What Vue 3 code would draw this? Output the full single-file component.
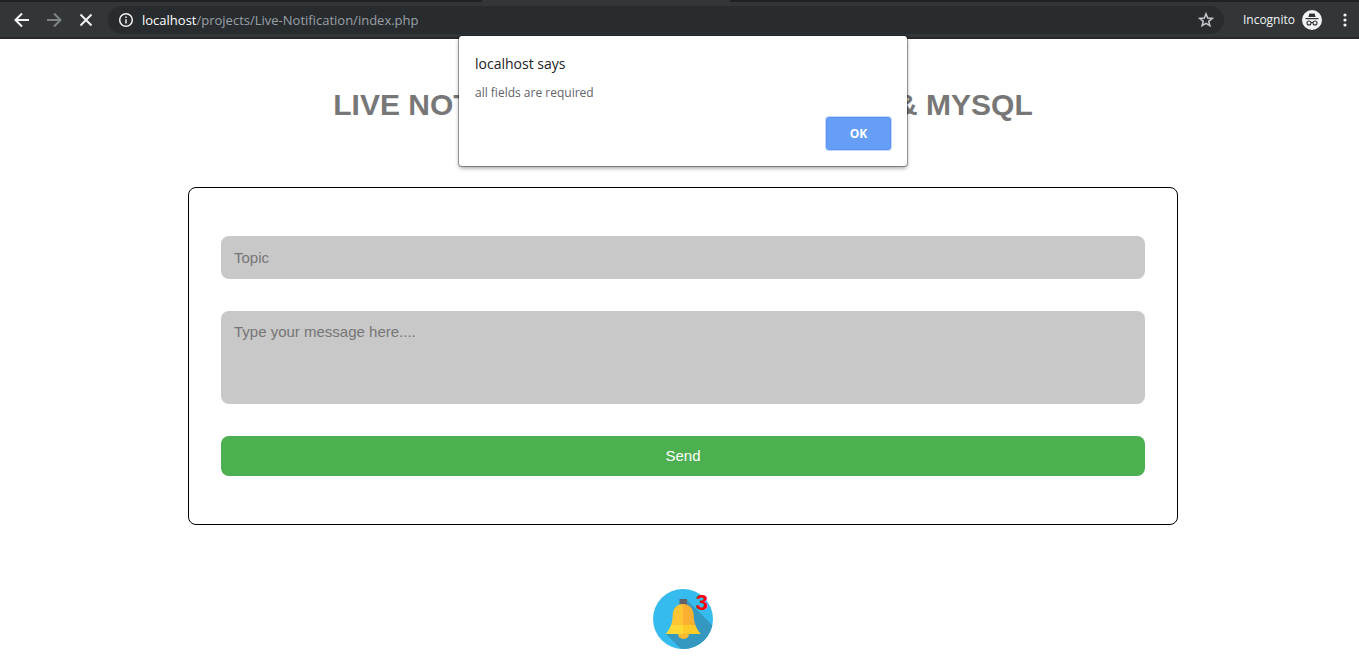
<script setup>
import { ref } from 'vue'

const url = { host: 'localhost', path: '/projects/Live-Notification/index.php' }
const topic = ref('')
const message = ref('')
const count = ref(3)
const alertOpen = ref(true)

function send() {
  if (!topic.value || !message.value) {
    alertOpen.value = true
    return
  }
  count.value += 1
  topic.value = ''
  message.value = ''
}
</script>

<template>
  <div class="browser">
    <header class="chrome">
      <div class="tabs"><span class="tab"></span></div>
      <div class="toolbar">
        <nav class="nav">
          <button type="button" aria-label="Back">
            <svg width="16" height="16" viewBox="0 0 16 16"><path d="M15 8H2M8 1.5 1.5 8 8 14.5" /></svg>
          </button>
          <button type="button" class="dim" aria-label="Forward">
            <svg width="16" height="16" viewBox="0 0 16 16"><path d="M1 8h13M8 1.5 14.5 8 8 14.5" /></svg>
          </button>
          <button type="button" aria-label="Stop loading">
            <svg width="16" height="16" viewBox="0 0 16 16"><path d="m2.500 2.500 11 11m0-11-11 11" /></svg>
          </button>
        </nav>
        <div class="omnibox">
          <svg class="info" width="16" height="16" viewBox="0 0 16 16">
            <circle cx="8" cy="8" r="6.3" />
            <path d="M8 7.2v4.2M8 4.4v1.7" />
          </svg>
          <span class="url"><b>{{ url.host }}</b>{{ url.path }}</span>
          <button type="button" class="star" aria-label="Bookmark this page">
            <svg width="16" height="16" viewBox="0 0 16 16">
              <path d="m8 1.9 1.7 4.2 4.5.3-3.5 2.9 1.2 4.4L8 11.3l-3.9 2.4 1.2-4.4-3.5-2.9 4.5-.3z" />
            </svg>
          </button>
        </div>
        <div class="profile">
          <span>Incognito</span>
          <svg width="20" height="20" viewBox="0 0 20 20">
            <circle cx="10" cy="10" r="10" fill="#f1f3f4" />
            <path d="M6.4 7 7.3 4q.3-.9 1.2-.6L10 3.8l1.5-.4q.9-.3 1.2.6l.9 3z" fill="#303134" />
            <path d="M3.5 8.6h13" stroke="#303134" stroke-width="1.2" />
            <g fill="none" stroke="#303134" stroke-width="1.1">
              <circle cx="7" cy="13" r="2" />
              <circle cx="13" cy="13" r="2" />
              <path d="M9 12.8q1-.7 2 0" />
            </g>
          </svg>
        </div>
        <button type="button" class="menu" aria-label="Menu">
          <svg width="4" height="14" viewBox="0 0 4 14">
            <circle cx="2" cy="2" r="1.6" /><circle cx="2" cy="7" r="1.6" /><circle cx="2" cy="12" r="1.6" />
          </svg>
        </button>
      </div>
    </header>

    <main class="page">
      <h1>LIVE NOTIFICATION USING AJAX, PHP &amp; MYSQL</h1>
      <form class="card" novalidate @submit.prevent="send">
        <input v-model="topic" type="text" placeholder="Topic" aria-label="Topic" />
        <textarea v-model="message" placeholder="Type your message here...." aria-label="Message"></textarea>
        <button type="submit">Send</button>
      </form>
      <div class="bell">
        <svg width="60" height="60" viewBox="0 0 60 60">
          <defs>
            <clipPath id="disc"><circle cx="30" cy="30" r="30" /></clipPath>
            <clipPath id="left"><rect width="30" height="60" /></clipPath>
            <path id="body" d="M30 15C23 15 20 20 19.700 26C19.400 33 18.500 38 12.700 45H47.800C42 38 41 33 40.700 26C40.400 20 37 15 30 15z" />
            <clipPath id="bodyclip"><use href="#body" /></clipPath>
          </defs>
          <circle cx="30" cy="30" r="30" fill="#35bbed" />
          <path clip-path="url(#disc)" d="M34 11 66 43V66H34L13 45 30 30z" fill="#3498c1" />
          <rect x="26.500" y="10" width="7.500" height="6" fill="#5f6266" />
          <path d="M25 45a5.500 5 0 0 0 11 0z" fill="#fdb932" />
          <g clip-path="url(#bodyclip)">
            <rect x="10" y="14" width="20" height="22" fill="#ffc533" />
            <rect x="30" y="14" width="20" height="22" fill="#fdaf31" />
            <rect x="10" y="36" width="20" height="10" fill="#ffd936" />
            <rect x="30" y="36" width="20" height="10" fill="#ffcb28" />
          </g>
        </svg>
        <span class="count">{{ count }}</span>
      </div>
    </main>

    <div v-if="alertOpen" class="overlay">
      <section class="dialog" role="alertdialog" aria-labelledby="dialog-title" aria-describedby="dialog-text">
        <h2 id="dialog-title">localhost says</h2>
        <p id="dialog-text">all fields are required</p>
        <button type="button" @click="alertOpen = false">OK</button>
      </section>
    </div>
  </div>
</template>

<style>
body {
  background: #fff;
}
</style>

<style scoped>
* {
  box-sizing: border-box;
}
button {
  border: 0;
  padding: 0;
  background: none;
  cursor: pointer;
}
svg {
  display: block;
}
.browser {
  position: relative;
  min-height: 100vh;
  font-family: "Liberation Sans", Arial, sans-serif;
}
.chrome {
  background: #323639;
  border-bottom: 2px solid #29292c;
  font-family: "Open Sans", "Noto Sans", sans-serif;
}
.tabs {
  display: flex;
  justify-content: center;
  height: 2px;
  padding-right: 148px;
  background: #202124;
}
.tab {
  width: 248px;
  background: #323639;
}
.toolbar {
  display: flex;
  align-items: center;
  height: 35px;
  padding: 0 12px 0 14px;
}
.nav {
  display: flex;
  gap: 16px;
}
.nav svg,
.info,
.star svg {
  fill: none;
  stroke: #f1f3f4;
  stroke-width: 2;
}
.nav .dim svg {
  stroke: #818487;
}
.omnibox {
  display: flex;
  flex: 1;
  align-items: center;
  height: 28px;
  margin-left: 14px;
  padding: 0 10px;
  border-radius: 14px;
  background: #282c2f;
}
.info,
.star svg {
  stroke-width: 1.5;
}
.star svg {
  stroke: #c5c8cb;
}
.url {
  flex: 1;
  margin-left: 8px;
  color: #9aa0a6;
  font-size: 13px;
  line-height: 20px;
}
.url b {
  color: #fff;
  font-weight: 400;
}
.profile {
  display: flex;
  align-items: center;
  gap: 7px;
  margin: 0 21px 0 19px;
  color: #f1f3f4;
  font-size: 12px;
}
.menu svg {
  fill: #f1f3f4;
}
.page {
  display: flex;
  flex-direction: column;
  align-items: center;
  padding: 48px 16px 12px 23px;
}
h1 {
  margin: 0;
  color: #777;
  font-size: 30px;
  line-height: 36px;
  text-align: center;
}
.card {
  display: flex;
  flex-direction: column;
  gap: 32px;
  width: 100%;
  max-width: 990px;
  margin: 64px 0;
  padding: 48px 32px;
  border: 1px solid #000;
  border-radius: 8px;
}
.card input,
.card textarea,
.card button {
  display: block;
  width: 100%;
  border: 0;
  border-radius: 8px;
  font-family: inherit;
  font-size: 15px;
}
.card input,
.card textarea {
  padding: 12px 13px;
  background: #c8c8c8;
  color: #333;
  outline: 0;
}
.card input {
  height: 43px;
}
.card textarea {
  height: 93px;
  resize: none;
}
.card ::placeholder {
  color: #757575;
}
.card button {
  height: 40px;
  padding-bottom: 2px;
  background: #4caf50;
  color: #fff;
}
.bell {
  position: relative;
}
.count {
  position: absolute;
  top: 2px;
  right: 5px;
  color: #f00;
  font-size: 22px;
  font-weight: 700;
  line-height: 24px;
}
.overlay {
  position: absolute;
  top: 36px;
  right: 0;
  left: 7px;
  display: flex;
  justify-content: center;
  pointer-events: none;
}
.dialog {
  display: flex;
  flex-direction: column;
  width: 448px;
  padding: 16px;
  border-radius: 3px;
  background: #fff;
  box-shadow: 0 0 0 1px rgba(0, 0, 0, 0.3), 0 2px 4px rgba(0, 0, 0, 0.4);
  font-family: "Open Sans", "Noto Sans", sans-serif;
  pointer-events: auto;
}
.dialog h2 {
  margin: 0;
  color: #202124;
  font-size: 14px;
  font-weight: 400;
  line-height: 24px;
}
.dialog p {
  margin: 7px 0 14px;
  color: #5f6368;
  font-size: 12px;
  line-height: 20px;
}
.dialog button {
  align-self: flex-end;
  width: 65px;
  height: 33px;
  padding-bottom: 1px;
  border: 1px solid #5a94f5;
  border-radius: 3px;
  background: #669df6;
  box-shadow: 0 0 0 1px #c2d8fc;
  color: #fff;
  font-family: inherit;
  font-size: 12px;
  font-weight: 700;
}
</style>
